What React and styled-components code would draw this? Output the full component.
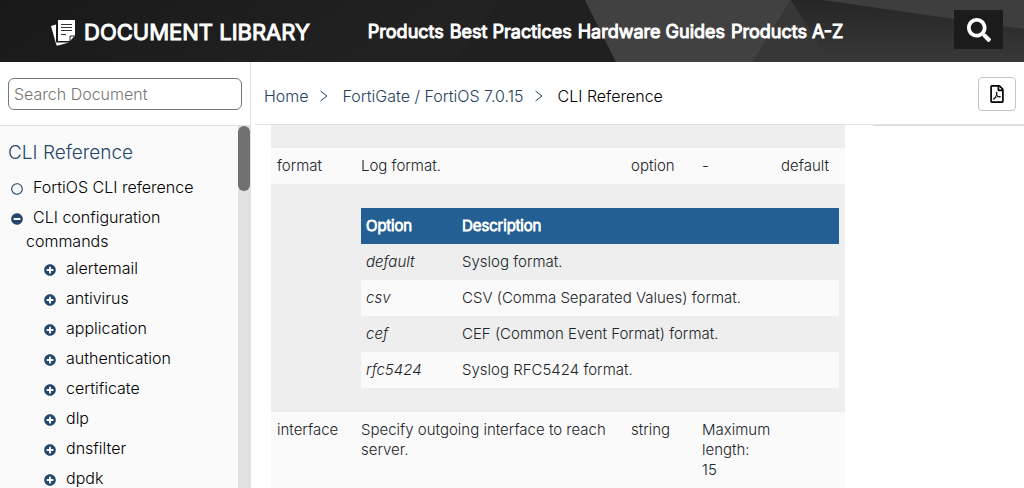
import React from "react";
import styled, { createGlobalStyle } from "styled-components";
import {
  FaSearch,
  FaRegFilePdf,
  FaRegCircle,
  FaPlusCircle,
  FaMinusCircle,
} from "react-icons/fa";

const navLinks = ["Products", "Best Practices", "Hardware Guides", "Products A-Z"];

const commands = [
  "alertemail",
  "antivirus",
  "application",
  "authentication",
  "certificate",
  "dlp",
  "dnsfilter",
  "dpdk",
];

const formats = [
  ["default", "Syslog format."],
  ["csv", "CSV (Comma Separated Values) format."],
  ["cef", "CEF (Common Event Format) format."],
  ["rfc5424", "Syslog RFC5424 format."],
];

const App = () => {
  return (
    <Page>
      <GlobalStyle />
      <Header>
        <Backdrop />
        <Brand href="#">
          <Logo />
          Document Library
        </Brand>
        <Nav>
          {navLinks.map((label) => (
            <NavLink href="#" key={label}>
              {label}
            </NavLink>
          ))}
        </Nav>
        <SearchButton type="button" aria-label="Search">
          <FaSearch size={24} />
        </SearchButton>
      </Header>
      <Body>
        <Sidebar>
          <SearchForm>
            <SearchInput type="text" placeholder="Search Document" aria-label="Search Document" />
          </SearchForm>
          <Toc>
            <TocScroll>
              <TocTitle href="#">CLI Reference</TocTitle>
              <TocList>
                <TocItem>
                  <FaRegCircle />
                  <TocLink href="#">FortiOS CLI reference</TocLink>
                </TocItem>
                <TocItem>
                  <FaMinusCircle />
                  <TocLink href="#">CLI configuration commands</TocLink>
                  <TocList $nested>
                    {commands.map((name) => (
                      <TocItem key={name}>
                        <FaPlusCircle />
                        <TocLink href="#">{name}</TocLink>
                      </TocItem>
                    ))}
                  </TocList>
                </TocItem>
              </TocList>
            </TocScroll>
            <Track>
              <Thumb />
            </Track>
          </Toc>
        </Sidebar>
        <Main>
          <TopBar>
            <Crumbs aria-label="Breadcrumb">
              <Crumb href="#">Home</Crumb>
              <Chevron />
              <Crumb href="#">FortiGate / FortiOS 7.0.15</Crumb>
              <Chevron />
              <Current>CLI Reference</Current>
            </Crumbs>
            <PdfButton type="button" aria-label="Download PDF">
              <FaRegFilePdf size={18} />
            </PdfButton>
          </TopBar>
          <Columns>
            <Article>
              <Table>
                <colgroup>
                  <Col $width={84} />
                  <Col />
                  <Col $width={71} />
                  <Col $width={79} />
                  <Col $width={70} />
                </colgroup>
                <tbody>
                  <Row $shaded>
                    <Spacer colSpan={5} />
                  </Row>
                  <Row>
                    <Cell>format</Cell>
                    <Cell>Log format.</Cell>
                    <Cell>option</Cell>
                    <Cell>-</Cell>
                    <Cell>default</Cell>
                  </Row>
                  <Row $shaded>
                    <Cell />
                    <NestedCell colSpan={4}>
                      <Table>
                        <colgroup>
                          <Col $width={96} />
                          <Col />
                        </colgroup>
                        <thead>
                          <tr>
                            <HeadCell>Option</HeadCell>
                            <HeadCell>Description</HeadCell>
                          </tr>
                        </thead>
                        <tbody>
                          {formats.map(([name, text], i) => (
                            <Row key={name} $shaded={i % 2 === 0}>
                              <OptionCell>
                                <em>{name}</em>
                              </OptionCell>
                              <OptionCell>{text}</OptionCell>
                            </Row>
                          ))}
                        </tbody>
                      </Table>
                    </NestedCell>
                  </Row>
                  <Row>
                    <Cell>interface</Cell>
                    <Cell>Specify outgoing interface to reach server.</Cell>
                    <Cell>string</Cell>
                    <Cell>
                      Maximum length:
                      <br />
                      15
                    </Cell>
                    <Cell />
                  </Row>
                </tbody>
              </Table>
            </Article>
            <Aside />
          </Columns>
        </Main>
      </Body>
    </Page>
  );
};

const Logo = () => (
  <svg width="25" height="27" viewBox="0 0 25 27" aria-hidden="true">
    <path d="M0 7 L5 5.5 V23.5 H18 L7 26.5 H5.5 Z" fill="#fff" />
    <path d="M7 1 H24 V16.5 L19 22 H7 Z" fill="#fff" />
    <path d="M19 22 V17 H24" fill="none" stroke="#222" />
    <path d="M10 5.5 H21 M10 8.5 H21 M10 11.5 H21 M10 15.5 H15" stroke="#333" />
  </svg>
);

const Chevron = () => (
  <svg width="8" height="12" viewBox="0 0 8 12" aria-hidden="true">
    <path d="M0.5 1 L7 6 L0.5 11" fill="none" stroke="#24425f" />
  </svg>
);

const Backdrop = () => (
  <BackdropSvg viewBox="0 0 1024 62" preserveAspectRatio="none" aria-hidden="true">
    <defs>
      <linearGradient id="left" x1="0" x2="1" y1="0" y2="0.1">
        <stop offset="0" stopColor="#191919" />
        <stop offset="0.5" stopColor="#222" />
        <stop offset="1" stopColor="#232323" />
      </linearGradient>
      <linearGradient id="right" x1="0" x2="0" y1="0" y2="1">
        <stop offset="0" stopColor="#262626" />
        <stop offset="1" stopColor="#383838" />
      </linearGradient>
    </defs>
    <rect width="1024" height="62" fill="url(#left)" />
    <path d="M455 62 L500 0 H585 L616 62 Z" fill="#202020" />
    <path d="M585 0 H791 L753 62 H616 Z" fill="#414141" />
    <path d="M791 0 L753 62 H1024 V0 Z" fill="url(#right)" />
    <path d="M791 0 L753 62 H830 Z" fill="#373737" />
    <path d="M822 0 H1024 V29 Z" fill="#3e3e3e" />
  </BackdropSvg>
);

const GlobalStyle = createGlobalStyle`
  * {
    box-sizing: border-box;
  }

  body {
    margin: 0;
    background: #fff;
    color: #212529;
    font-family: Inter, "Liberation Sans", sans-serif;
    font-size: 15px;
    font-weight: 300;
    line-height: 20px;
  }

  a {
    text-decoration: none;
  }

  button {
    padding: 0;
    cursor: pointer;
  }
`;

const Page = styled.div`
  display: flex;
  flex-direction: column;
  height: 100vh;
  overflow: hidden;
`;

const Header = styled.header`
  position: relative;
  display: flex;
  align-items: flex-start;
  flex-shrink: 0;
  height: 62px;
  padding: 10px 21px 0 51px;
  color: #fff;
`;

const BackdropSvg = styled.svg`
  position: absolute;
  inset: 0;
  z-index: -1;
  width: 100%;
  height: 100%;
`;

const Brand = styled.a`
  display: flex;
  align-items: center;
  gap: 8px;
  color: #fff;
  font-size: 22px;
  font-weight: 400;
  line-height: 44px;
  text-transform: uppercase;
  white-space: nowrap;
  -webkit-text-stroke: 1px #fff;
`;

const Nav = styled.nav`
  display: flex;
  flex: 1;
  gap: 6px;
  margin-left: 58px;
`;

const NavLink = styled.a`
  color: #fff;
  font-size: 18px;
  font-weight: 400;
  line-height: 44px;
  white-space: nowrap;
  -webkit-text-stroke: 1px #fff;
`;

const SearchButton = styled.button`
  display: flex;
  align-items: center;
  justify-content: center;
  width: 49px;
  height: 39px;
  border: 0;
  background: #1b1b1b;
  color: #fff;
`;

const Body = styled.div`
  display: flex;
  flex: 1;
  min-height: 0;
`;

const Sidebar = styled.aside`
  display: flex;
  flex-direction: column;
  flex-shrink: 0;
  width: 251px;
  border-right: 1px solid #dee2e6;
`;

const SearchForm = styled.form`
  padding: 16px 8px 15px;
`;

const SearchInput = styled.input`
  display: block;
  width: 100%;
  height: 32px;
  padding: 0 5px;
  border: 1px solid #767676;
  border-radius: 6px;
  background: #fff;
  font: inherit;
  font-size: 16px;

  &::placeholder {
    color: #757575;
  }
`;

const Toc = styled.div`
  display: flex;
  flex: 1;
  min-height: 0;
  border-top: 1px solid #e2e2e2;
  background: #fafafa;
`;

const TocScroll = styled.div`
  flex: 1;
  overflow: auto;
  padding: 15px 8px;
  scrollbar-width: none;
`;

const TocTitle = styled.a`
  display: block;
  margin-bottom: 7px;
  color: #24476b;
  font-size: 19px;
  line-height: 24px;
`;

const TocList = styled.ul`
  margin: 0;
  padding-left: ${(props) => (props.$nested ? "18px" : "3px")};
  list-style: none;
`;

const TocItem = styled.li`
  padding: 3px 0 3px 15px;
  color: #24476b;
  font-size: 16px;
  line-height: 24px;
  text-indent: -15px;

  &:has(ul) {
    padding-bottom: 0;
  }

  svg {
    width: 12px;
    height: 12px;
    margin-right: 10px;
    vertical-align: -2px;
  }
`;

const TocLink = styled.a`
  color: #000;
`;

const Track = styled.div`
  width: 12px;
  background: #e1e1e1;
`;

const Thumb = styled.div`
  height: 18%;
  border-radius: 6px;
  background: #717171;
`;

const Main = styled.main`
  display: flex;
  flex: 1;
  flex-direction: column;
  min-width: 0;
  padding-left: 4px;
`;

const TopBar = styled.div`
  display: flex;
  align-items: center;
  justify-content: space-between;
  height: 63px;
  padding: 2px 8px 0 9px;
  border-bottom: 1px solid #e2e2e2;
`;

const Crumbs = styled.nav`
  display: flex;
  align-items: center;
  gap: 15px;
  padding-top: 4px;
  font-size: 16px;

  svg {
    margin-left: -4px;
  }
`;

const Crumb = styled.a`
  color: #24425f;
`;

const Current = styled.span`
  color: #000;
`;

const PdfButton = styled.button`
  display: flex;
  align-items: center;
  justify-content: center;
  width: 38px;
  height: 34px;
  border: 1px solid #c4c4c4;
  border-radius: 4px;
  background: #fff;
  color: #000;
`;

const Columns = styled.div`
  display: flex;
  flex: 1;
  min-height: 0;
`;

const Article = styled.article`
  flex: 1;
  overflow: auto;
  padding: 0 28px 0 16px;
  scrollbar-width: none;
`;

const Aside = styled.aside`
  width: 151px;
  border-top: 1px solid #dcdcdc;
`;

const Table = styled.table`
  width: 100%;
  border-collapse: collapse;
  table-layout: fixed;
`;

const Col = styled.col`
  width: ${(props) => (props.$width ? `${props.$width}px` : "auto")};
`;

const Row = styled.tr`
  background: ${(props) => (props.$shaded ? "#eeeeee" : "#fafafa")};
`;

const Cell = styled.td`
  padding: 8px 6px;
  vertical-align: top;
`;

const OptionCell = styled(Cell)`
  padding: 8px 5px;
`;

const Spacer = styled.td`
  height: 23px;
  padding: 0;
`;

const NestedCell = styled.td`
  padding: 24px 6px;
`;

const HeadCell = styled.th`
  padding: 8px 5px;
  background: #235f92;
  color: #fff;
  font-weight: 300;
  text-align: left;
  -webkit-text-stroke: 1px #fff;
`;

export default App;
